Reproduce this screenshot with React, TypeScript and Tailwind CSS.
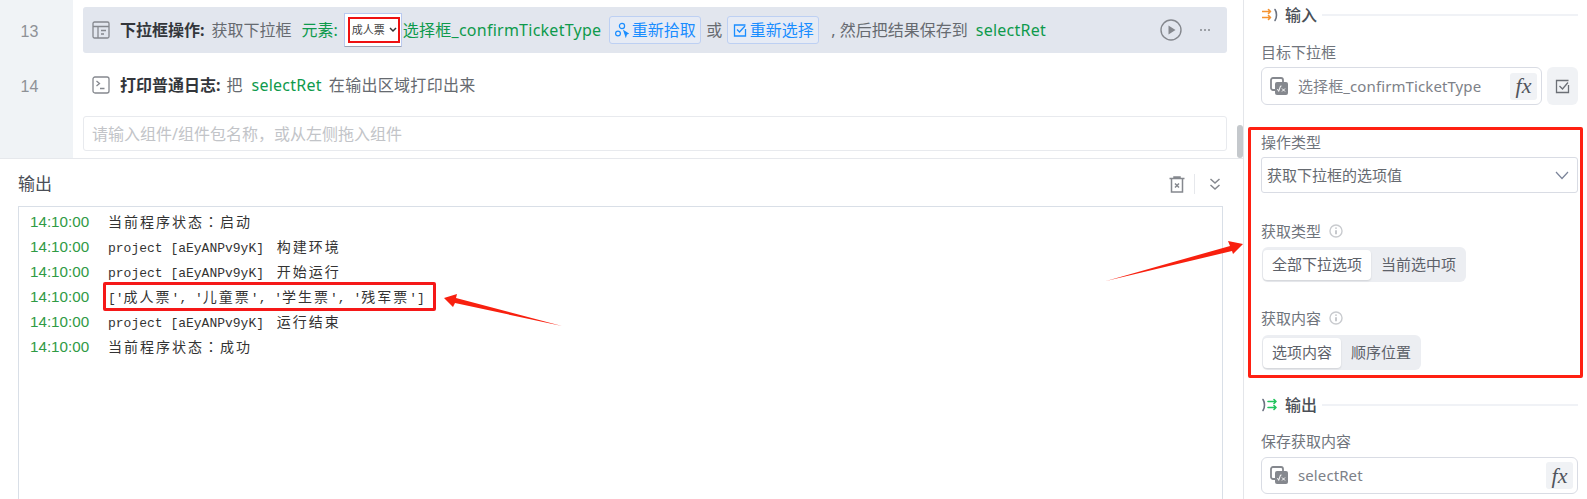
const sans = "font-['Noto_Sans','Noto_Sans_CJK_SC',sans-serif]";

function Arrows({ color, flip }: { color: string; flip?: boolean }) {
  return (
    <svg width="16" height="14" viewBox="0 0 16 14" fill="none" strokeWidth="1.6" strokeLinecap="round" strokeLinejoin="round">
      {flip ? (
        <>
          <path d="M1 1.5C3 4.5 3 9.5 1 12.5" stroke="#6b7280" />
          <path d="M6 3.5h8M12 1.5l2 2-2 2" stroke={color} />
          <path d="M6 9.5h8M12 7.5l2 2-2 2" stroke={color} />
        </>
      ) : (
        <>
          <path d="M0.5 3.5h8M6.5 1.5l2 2-2 2" stroke={color} />
          <path d="M0.5 9.5h8M6.5 7.5l2 2-2 2" stroke={color} />
          <path d="M13 1.5C15 4.5 15 9.5 13 12.5" stroke="#6b7280" />
        </>
      )}
    </svg>
  );
}

function SectionHeader({ title, color, flip }: { title: string; color: string; flip?: boolean }) {
  return (
    <div className="flex h-[20px] items-center">
      <div className="ml-[1px] flex w-[23px] shrink-0 items-center">
        <Arrows color={color} flip={flip} />
      </div>
      <span className="text-[16px] font-medium leading-[20px] text-[#4b4f57]">{title}</span>
      <div className="ml-[5px] h-[2px] flex-1 bg-[#f0f2f6]" />
    </div>
  );
}

function VarIcon() {
  return (
    <svg width="19" height="19" viewBox="0 0 19 19" className="shrink-0">
      <rect x="1" y="1" width="12" height="12" rx="2" fill="none" stroke="#85888e" strokeWidth="1.8" />
      <rect x="5" y="5" width="13" height="13" rx="2" fill="#85888e" />
      <path d="M7.5 12l1.2 2.4L10.5 9h1M12 11.5l3 3M15 11.5l-3 3" fill="none" stroke="#fff" strokeWidth="1" />
    </svg>
  );
}

function FxButton() {
  return (
    <div className="flex h-[27px] w-[27px] items-center justify-center rounded-[3px] bg-[#f0f2f5] font-['Liberation_Serif',serif] text-[22px] italic leading-none text-[#50545c]">
      fx
    </div>
  );
}

function Info() {
  return (
    <svg width="14" height="14" viewBox="0 0 13 13" className="ml-[8px]" fill="none">
      <circle cx="6.5" cy="6.5" r="5.6" stroke="#c9cbcf" strokeWidth="1.3" />
      <path d="M6.5 5.7v3.8M6.5 3.2v1.2" stroke="#b5b8bd" strokeWidth="1.4" />
    </svg>
  );
}

function Label({ children, info }: { children: string; info?: boolean }) {
  return (
    <div className="flex h-[20px] items-center text-[15px] leading-[20px] text-[#6f747c]">
      {children}
      {info && <Info />}
    </div>
  );
}

function Segment({ on, off, onW, w }: { on: string; off: string; onW: string; w: string }) {
  return (
    <div className={`ml-[1px] flex h-[35px] items-center rounded-[6px] bg-[#eceef2] pl-[1px] text-[15px] text-[#5d6169] ${w}`}>
      <div className={`flex h-[30px] items-center justify-center rounded-[4px] bg-white shadow-[0_1px_2px_rgba(0,0,0,0.12)] ${onW}`}>
        {on}
      </div>
      <div className="flex-1 text-center">{off}</div>
    </div>
  );
}

function Tag({ icon, text }: { icon: React.ReactNode; text: string }) {
  return (
    <div className="flex h-[28px] w-[92px] items-center justify-center gap-[3px] rounded-[3px] border border-[#bdd0f3] bg-[#e6ebf5] text-[16px] text-[#1a8dff]">
      {icon}
      <span>{text}</span>
    </div>
  );
}

function Log({ children }: { children: React.ReactNode }) {
  return (
    <div className="relative flex h-[25px] items-center">
      <span className="w-[89px] shrink-0 pl-[11px] font-['Liberation_Sans',sans-serif] text-[15.2px] text-[#2f9a45]">14:10:00</span>
      <span className="whitespace-pre font-['Liberation_Mono','Noto_Sans_CJK_SC',monospace] text-[13px] text-[#333]">{children}</span>
    </div>
  );
}

function C({ children, gap }: { children: React.ReactNode; gap?: boolean }) {
  return (
    <span className={`font-['Noto_Sans_CJK_SC',sans-serif] text-[14px] tracking-[2px] ${gap ? 'ml-[5px]' : ''}`}>
      {children}
    </span>
  );
}

function Colon() {
  return <span className="font-['Noto_Sans_CJK_TC',sans-serif]">{"\uFF1A"}</span>;
}

export default function App() {
  return (
    <div className={`relative flex h-[499px] w-[1587px] overflow-hidden bg-white ${sans}`}>
      {/* left */}
      <div className="flex w-[1243px] shrink-0 flex-col">
        <div className="flex h-[159px] shrink-0 border-b border-[#e6e8ec]">
          <div className="flex w-[73px] shrink-0 flex-col bg-[#f0f3f6] pt-[9px] text-center font-['Liberation_Sans',sans-serif] text-[16px] text-[#8e9196]">
            <div className="flex h-[46px] items-center justify-center pr-[14px]">13</div>
            <div className="mt-[9px] flex h-[46px] items-center justify-center pr-[14px]">14</div>
          </div>
          <div className="ml-[10px] w-[1144px] shrink-0 pt-[7px] text-[16px] text-[#666a70]">
            <div className="flex h-[46px] items-center rounded-[3px] bg-[#e2e6ee] pl-[9px]">
              <svg width="18" height="18" viewBox="0 0 18 18" fill="none" stroke="#85888e" strokeWidth="1.3" className="shrink-0">
                <rect x="1" y="1" width="16" height="16" rx="1.5" />
                <path d="M1 5.5h16M6 5.5V17M9 9.5h5M9 13h3" />
              </svg>
              <span className="ml-[10px] font-bold text-[#33363b]">下拉框操作:</span>
              <span className="ml-[7px]">获取下拉框</span>
              <span className="ml-[10px] text-[#0e9a4c]">元素:</span>
              <div className="ml-[6px] h-[34px] w-[58px] shrink-0 rounded-[1px] border border-[#b9c9f0] border-b-[#9aa3b5] bg-white p-[3px]">
                <div className="flex h-[26px] w-[52px] items-center border-[2px] border-[#ee1111] pl-[2px] text-[11px] text-[#444]">
                  成人票
                  <svg width="8" height="6" viewBox="0 0 8 6" fill="none" stroke="#333" strokeWidth="1.5" className="ml-[4px]">
                    <path d="M1 1l3 3 3-3" />
                  </svg>
                </div>
              </div>
              <span className="ml-[1px] whitespace-nowrap tracking-[0.25px] text-[#0e9a4c]">选择框_confirmTicketType</span>
              <div className="ml-[8px]">
                <Tag
                  text="重新拾取"
                  icon={
                    <svg width="14" height="16" viewBox="0 0 14 16" fill="none" stroke="#1a8dff" strokeWidth="1.2">
                      <circle cx="7" cy="4" r="2.6" />
                      <circle cx="3" cy="11.5" r="2.4" />
                      <path d="M9 9l4 2.5-1.6.8-.6 2z" fill="#1a8dff" />
                    </svg>
                  }
                />
              </div>
              <span className="ml-[5px]">或</span>
              <div className="ml-[5px]">
                <Tag
                  text="重新选择"
                  icon={
                    <svg width="14" height="14" viewBox="0 0 14 14" fill="none" stroke="#1a8dff" strokeWidth="1.3">
                      <path d="M12.5 2H1.5v11h11V6" />
                      <path d="M4 6.5l2.5 2.5L12 3" />
                    </svg>
                  }
                />
              </div>
              <span className="ml-[12px] whitespace-nowrap">, 然后把结果保存到</span>
              <span className="ml-[8px] tracking-[0.25px] text-[#0e9a4c]">selectRet</span>
              <div className="flex-1" />
              <svg width="22" height="22" viewBox="0 0 22 22" fill="none" className="shrink-0">
                <circle cx="11" cy="11" r="10" stroke="#85888e" strokeWidth="1.4" />
                <path d="M8.5 6.5l7 4.5-7 4.5z" fill="#85888e" />
              </svg>
              <div className="ml-[18px] mr-[17px] flex gap-[1.5px]">
                <i className="h-[2.5px] w-[2.5px] rounded-full bg-[#85888e]" />
                <i className="h-[2.5px] w-[2.5px] rounded-full bg-[#85888e]" />
                <i className="h-[2.5px] w-[2.5px] rounded-full bg-[#85888e]" />
              </div>
            </div>
            <div className="mt-[9px] flex h-[46px] items-center pl-[9px]">
              <svg width="18" height="18" viewBox="0 0 18 18" fill="none" stroke="#85888e" strokeWidth="1.3" className="shrink-0">
                <rect x="1" y="1" width="16" height="16" rx="2" />
                <path d="M4.5 5l3 2.5-3 2.5M8 12.5h4.5" />
              </svg>
              <span className="ml-[10px] font-bold text-[#33363b]">打印普通日志:</span>
              <span className="ml-[6px]">把</span>
              <span className="ml-[9px] tracking-[0.25px] text-[#0e9a4c]">selectRet</span>
              <span className="ml-[7px] tracking-[0.3px]">在输出区域打印出来</span>
            </div>
            <div className="mt-[8px] flex h-[35px] items-center rounded-[3px] border border-[#e8eaee] pl-[8px] text-[#c2c4c8]">
              {"请输入组件/组件包名称\uFF0C或从左侧拖入组件"}
            </div>
          </div>
          <div className="ml-[10px] flex w-[6px] shrink-0 items-end">
            <div className="h-[33px] w-full rounded-[3px] bg-[#c4c8cc]" />
          </div>
        </div>

        <div className="flex h-[47px] shrink-0 items-center pl-[18px] pr-[22px] pt-[3px]">
          <span className="text-[17px] text-[#4b4f57]">输出</span>
          <div className="flex-1" />
          <svg width="16" height="17" viewBox="0 0 16 17" fill="none" stroke="#85888e" strokeWidth="1.5">
            <path d="M0.5 2.5h15M5 2.5V1h6v1.5M2.5 2.5v13.5h11V2.5" />
            <path d="M6 7.5l4 4M10 7.5l-4 4" />
          </svg>
          <div className="ml-[9px] h-[20px] w-px bg-[#e6e8ec]" />
          <svg width="12" height="14" viewBox="0 0 12 14" fill="none" stroke="#85888e" strokeWidth="1.5" className="ml-[14px]">
            <path d="M1.5 2l4.5 4 4.5-4M1.5 8l4.5 4 4.5-4" />
          </svg>
        </div>

        <div className="ml-[18px] w-[1205px] flex-1 border border-b-0 border-[#d9dfe7] pt-[3px]">
          <Log><C>当前程序状态<Colon />启动</C></Log>
          <Log>project [aEyANPv9yK] <C gap>构建环境</C></Log>
          <Log>project [aEyANPv9yK] <C gap>开始运行</C></Log>
          <Log>
            ['<C>成人票</C>', '<C>儿童票</C>', '<C>学生票</C>', '<C>残军票</C>']
            <span className="absolute left-[84px] top-[-3px] h-[29px] w-[333px] rounded-[2px] border-[3px] border-[#f51818]" />
          </Log>
          <Log>project [aEyANPv9yK] <C gap>运行结束</C></Log>
          <Log><C>当前程序状态<Colon />成功</C></Log>
        </div>
      </div>

      {/* right */}
      <div className="flex-1 border-l border-[#e4e6ea] pl-[17px] pr-[9px] pt-[5px]">
        <SectionHeader title="输入" color="#f59331" />
        <div className="mt-[17px]"><Label>目标下拉框</Label></div>
        <div className="mt-[5px] flex gap-[5px]">
          <div className="flex h-[38px] flex-1 items-center rounded-[6px] border border-[#d9dce4] pl-[8px] pr-[4px]">
            <VarIcon />
            <span className="ml-[9px] text-[15px] tracking-[0.1px] text-[#7d8188]">选择框_confirmTicketType</span>
            <div className="flex-1" />
            <FxButton />
          </div>
          <div className="flex h-[38px] w-[31px] items-center justify-center rounded-[6px] bg-[#f0f2f5]">
            <svg width="15" height="15" viewBox="0 0 15 15" fill="none" stroke="#6b6f76" strokeWidth="1.3">
              <path d="M13.5 1.5h-12v12h12V6" />
              <path d="M4.5 7l3 3 5.5-6.5" />
            </svg>
          </div>
        </div>

        <div className="-ml-[13px] -mr-[5px] mt-[22px] h-[251px] rounded-[2px] border-[3px] border-[#ff2012] pl-[10px] pr-[2px] pt-[2px]">
          <Label>操作类型</Label>
          <div className="mt-[5px] flex h-[36px] items-center rounded-[3px] border border-[#d9dce4] pl-[5px] pr-[8px] text-[15px] text-[#666a70]">
            获取下拉框的选项值
            <div className="flex-1" />
            <svg width="14" height="9" viewBox="0 0 14 9" fill="none" stroke="#7b8499" strokeWidth="1.2">
              <path d="M1 1l6 6.5L13 1" />
            </svg>
          </div>
          <div className="mt-[28px]"><Label info>获取类型</Label></div>
          <div className="mt-[6px]">
            <Segment on="全部下拉选项" off="当前选中项" onW="w-[108px]" w="w-[204px]" />
          </div>
          <div className="mt-[26px]"><Label info>获取内容</Label></div>
          <div className="mt-[7px]">
            <Segment on="选项内容" off="顺序位置" onW="w-[78px]" w="w-[159px]" />
          </div>
        </div>

        <div className="mt-[17px]">
          <SectionHeader title="输出" color="#21c45d" flip />
        </div>
        <div className="mt-[16px]"><Label>保存获取内容</Label></div>
        <div className="mt-[6px] flex h-[37px] items-center rounded-[6px] border border-[#d9dce4] pl-[8px] pr-[4px]">
          <VarIcon />
          <span className="ml-[9px] text-[15px] tracking-[0.1px] text-[#7d8188]">selectRet</span>
          <div className="flex-1" />
          <FxButton />
        </div>
      </div>

      {/* annotation arrows drawn on top of the screenshot */}
      <svg className="pointer-events-none absolute left-0 top-0" width="1587" height="499" fill="#f8200f">
        <polygon points="444,298 457,294 456,298 562,326 455,303 453,307" />
        <polygon points="1243,244 1228,241 1230,246 1106,281 1232,251 1233,254" />
      </svg>
    </div>
  );
}
